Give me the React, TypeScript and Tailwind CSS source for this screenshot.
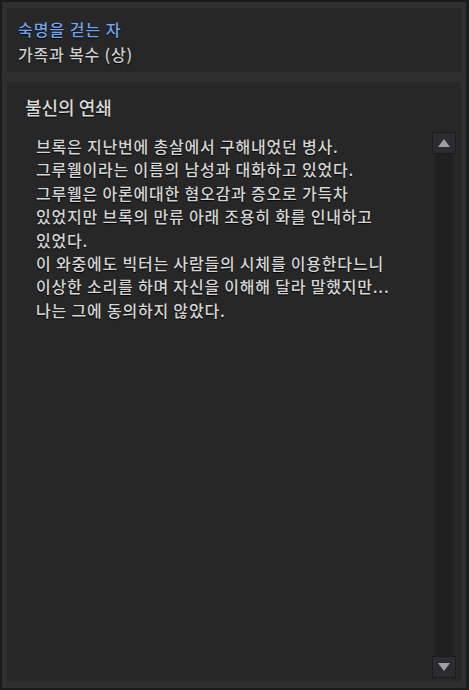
import { ReactNode } from "react";

const lines = [
  "브록은 지난번에 총살에서 구해내었던 병사.",
  "그루웰이라는 이름의 남성과 대화하고 있었다.",
  "그루웰은 아론에대한 혐오감과 증오로 가득차",
  "있었지만 브록의 만류 아래 조용히 화를 인내하고",
  "있었다.",
  "이 와중에도 빅터는 사람들의 시체를 이용한다느니",
  "이상한 소리를 하며 자신을 이해해 달라 말했지만...",
  "나는 그에 동의하지 않았다.",
];

const font = "font-['Noto_Sans_CJK_KR','Noto_Sans',sans-serif]";
const shadow = "[text-shadow:0_1px_1px_rgba(0,0,0,0.9)]";

// Small square scroll button with a triangle
function ScrollButton({ children }: { children: ReactNode }) {
  return (
    <div className="w-[24px] h-[22px] bg-[#2c2c30] border border-[#1c1c1e] flex items-center justify-center">
      {children}
    </div>
  );
}

export default function App() {
  return (
    <div className={`w-[469px] h-[690px] bg-[#1b1b1b] pt-[2px] pl-[2px] pr-[3px] pb-[2px] ${font}`}>
      <div className="h-full bg-[#2f2f2f] pt-[6px] px-[5px] pb-[6px] flex flex-col gap-[10px]">
        {/* Quest header */}
        <div className="h-[64px] bg-[#272727] pt-[9px] pl-[11px]">
          <p className={`text-[16px] leading-[25px] tracking-[1px] font-medium text-[#72a7ee] ${shadow}`}>숙명을 걷는 자</p>
          <p className={`text-[16px] leading-[25px] tracking-[0.8px] font-medium text-[#cfcfcf] ${shadow}`}>가족과 복수 (상)</p>
        </div>

        {/* Story body */}
        <div className="flex-1 bg-[#272727] flex">
          <div className="flex-1 pt-[13px] pl-[18px]">
            <h2 className={`text-[18px] leading-[25px] font-medium text-[#dadada] ${shadow}`}>불신의 연쇄</h2>
            <div className="mt-[15px] pl-[11px]">
              {lines.map((l) => (
                <p key={l} className={`text-[16px] leading-[23.4px] tracking-[0.8px] font-medium text-[#d6d6d6] whitespace-nowrap ${shadow}`}>
                  {l}
                </p>
              ))}
            </div>
          </div>

          {/* Scrollbar */}
          <div className="w-[24px] mr-[5px] mt-[50px] mb-[4px] flex flex-col">
            <ScrollButton>
              <svg width="14" height="10" viewBox="0 0 14 10">
                <polygon points="7,1 13,9 1,9" fill="#a19ea6" />
              </svg>
            </ScrollButton>
            <div className="flex-1 mx-[3px] bg-[#202020]" />
            <ScrollButton>
              <svg width="14" height="10" viewBox="0 0 14 10">
                <polygon points="1,1 13,1 7,9" fill="#a19ea6" />
              </svg>
            </ScrollButton>
          </div>
        </div>
      </div>
    </div>
  );
}
